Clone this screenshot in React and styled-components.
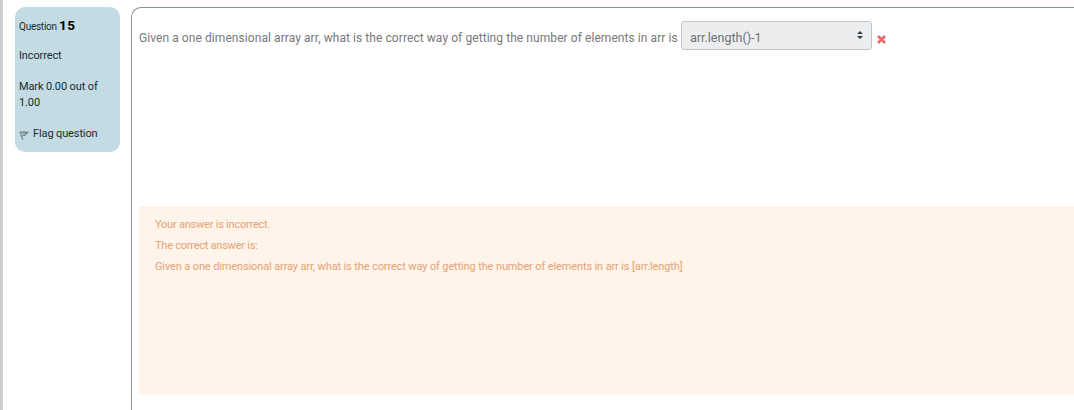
import React from "react";
import styled, { createGlobalStyle } from "styled-components";

const GlobalStyle = createGlobalStyle`
  * { box-sizing: border-box; }
  body {
    margin: 0;
    background: #fff;
    font-family: Roboto, "Noto Sans", sans-serif;
    overflow: hidden;
  }
`;

const Page = styled.main`
  display: flex;
  align-items: flex-start;
  height: 410px;
  padding: 7px 0 0 12px;
  border-left: 3px solid #cdcccd;
  overflow: hidden;
`;

const InfoCard = styled.aside`
  flex: 0 0 105px;
  height: 145px;
  margin-right: 11px;
  padding: 10px 4px 0;
  border-radius: 10px;
  background: #c3dbe3;
  color: #1c2a30;
  font-size: 11px;
  line-height: 16px;
  letter-spacing: -0.12px;
`;

const QuestionLabel = styled.h3`
  margin: 0 0 13px;
  font-size: 10px;
  font-weight: 400;
  line-height: 16px;
  letter-spacing: -0.25px;
  white-space: nowrap;
`;

const QuestionNumber = styled.span`
  font-size: 13.5px;
  font-weight: 700;
  letter-spacing: 0.5px;
  color: #000;
`;

const InfoText = styled.div`
  margin-bottom: 15px;
`;

const FlagRow = styled.div`
  display: flex;
  align-items: center;
  gap: 4px;
  white-space: nowrap;
  svg { flex: none; margin-top: 3px; }
`;

const Content = styled.section`
  flex: 1;
  min-width: 0;
  height: 420px;
  padding: 13px 0 0 7px;
  border: 1px solid #85929a;
  border-right: 0;
  border-radius: 10px 0 0 0;
`;

const Prompt = styled.div`
  display: flex;
  align-items: center;
  height: 29px;
  margin-bottom: 156px;
  color: #76787a;
  font-size: 12px;
  white-space: nowrap;
`;

const PromptText = styled.span`
  flex: 0 0 542px;
  min-width: 0;
  padding-top: 4px;
  letter-spacing: 0.072px;
`;

const AnswerSelect = styled.div`
  display: flex;
  align-items: center;
  justify-content: space-between;
  width: 191px;
  height: 29px;
  margin-right: 5px;
  padding: 3px 8px 0 8px;
  border: 1px solid #c3c6c9;
  border-radius: 3px;
  background: #ebedef;
  color: #6b7278;
  font-size: 12.5px;
  svg { margin-top: -4px; }
`;

const WrongMark = styled.span`
  display: flex;
  padding-top: 7px;
`;

const Feedback = styled.div`
  height: 189px;
  padding: 8px 16px;
  border-radius: 3px 0 0 3px;
  background: #fff4ea;
  color: #e5a276;
  font-size: 11px;
`;

const FeedbackLine = styled.p`
  margin: 0;
  line-height: 21px;
  white-space: nowrap;
  letter-spacing: ${({ $spacing }) => $spacing};
`;

const FlagIcon = () => (
  <svg width="10" height="11" viewBox="0 0 10 11" fill="none" stroke="#6f7f86" strokeWidth="1.2">
    <path d="M1 1.6 3.8 9.9" />
    <path d="M2.2 2.2C4.3 1.4 6 2.6 8.7 2.3 7.2 3.6 6.6 5.6 3.4 6" fill="#a9bac0" />
  </svg>
);

const SortIcon = () => (
  <svg width="6" height="8" viewBox="0 0 6 8" fill="#343a40">
    <path d="M3 0 6 3H0ZM0 5H6L3 8Z" />
  </svg>
);

const WrongIcon = () => (
  <svg width="9" height="9" viewBox="0 0 9 9" stroke="#e96a6d" strokeWidth="2.7">
    <path d="M1 1 8 8M8 1 1 8" />
  </svg>
);

export default function App() {
  return (
    <>
      <GlobalStyle />
      <Page>
        <InfoCard>
          <QuestionLabel>
            Question <QuestionNumber>15</QuestionNumber>
          </QuestionLabel>
          <InfoText>Incorrect</InfoText>
          <InfoText>Mark 0.00 out of 1.00</InfoText>
          <FlagRow>
            <FlagIcon />
            <span>Flag question</span>
          </FlagRow>
        </InfoCard>
        <Content>
          <Prompt>
            <PromptText>
              Given a one dimensional array arr, what is the correct way of getting the number of elements in arr is
            </PromptText>
            <AnswerSelect>
              <span>arr.length()-1</span>
              <SortIcon />
            </AnswerSelect>
            <WrongMark>
              <WrongIcon />
            </WrongMark>
          </Prompt>
          <Feedback>
            <FeedbackLine $spacing="-0.22px">Your answer is incorrect.</FeedbackLine>
            <FeedbackLine $spacing="-0.24px">The correct answer is:</FeedbackLine>
            <FeedbackLine $spacing="-0.125px">
              Given a one dimensional array arr, what is the correct way of getting the number of elements in arr is [arr.length]
            </FeedbackLine>
          </Feedback>
        </Content>
      </Page>
    </>
  );
}
